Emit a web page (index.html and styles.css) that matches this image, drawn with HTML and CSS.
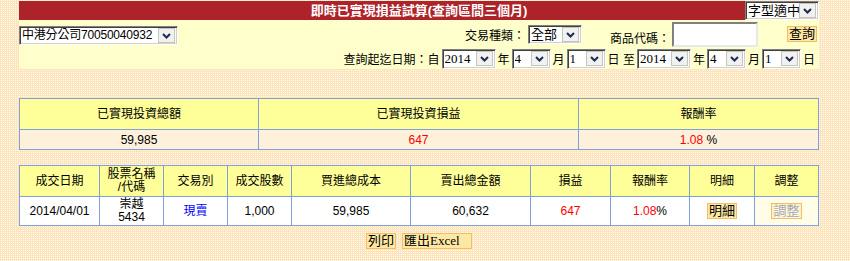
FILE: index.html
```html
<!DOCTYPE html>
<html lang="zh-Hant">
<head>
  <meta charset="UTF-8">
  <title>即時已實現損益試算</title>
  <link rel="stylesheet" href="styles.css">
</head>
<body>
  <div class="page">
    <div class="topbar">
      <div class="title">即時已實現損益試算(查詢區間三個月)</div>
      <select class="sel sel-font"><option>字型適中</option></select>
    </div>

    <div class="query">
      <div class="qrow">
        <select class="sel sel-branch"><option>中港分公司70050040932</option></select>
        <div class="qright">
          <span class="lbl">交易種類：</span>
          <select class="sel sel-kind"><option>全部</option></select>
          <span class="lbl lbl-code">商品代碼：</span>
          <input type="text" class="code">
          <button class="btn btn-query">查詢</button>
        </div>
      </div>
      <div class="qrow qdate">
        <span class="lbl">查詢起迄日期：自</span>
        <select class="sel sel-date sel-year"><option>2014</option></select><span class="lbl">年</span>
        <select class="sel sel-date sel-md"><option>4</option></select><span class="lbl">月</span>
        <select class="sel sel-date sel-md"><option>1</option></select><span class="lbl">日 至</span>
        <select class="sel sel-date sel-year"><option>2014</option></select><span class="lbl">年</span>
        <select class="sel sel-date sel-md"><option>4</option></select><span class="lbl">月</span>
        <select class="sel sel-date sel-md"><option>1</option></select><span class="lbl">日</span>
      </div>
    </div>

    <table class="grid summary">
      <tr>
        <th>已實現投資總額</th>
        <th>已實現投資損益</th>
        <th>報酬率</th>
      </tr>
      <tr>
        <td>59,985</td>
        <td class="red">647</td>
        <td><span class="red">1.08</span> %</td>
      </tr>
    </table>

    <table class="grid detail">
      <tr>
        <th>成交日期</th>
        <th>股票名稱<br>/代碼</th>
        <th>交易別</th>
        <th>成交股數</th>
        <th>買進總成本</th>
        <th>賣出總金額</th>
        <th>損益</th>
        <th>報酬率</th>
        <th>明細</th>
        <th>調整</th>
      </tr>
      <tr>
        <td>2014/04/01</td>
        <td class="stock">崇越<br>5434</td>
        <td class="blue">現賣</td>
        <td>1,000</td>
        <td>59,985</td>
        <td>60,632</td>
        <td class="red">647</td>
        <td><span class="red">1.08</span>%</td>
        <td><button class="btn">明細</button></td>
        <td class="adjust"><button class="btn" disabled>調整</button></td>
      </tr>
    </table>

    <div class="actions">
      <button class="btn">列印</button>
      <button class="btn btn-excel">匯出Excel</button>
    </div>
  </div>
</body>
</html>
```

FILE: styles.css
```css
html, body { margin: 0; padding: 0; }
body {
  background-color: #fde4bd;
  background-image: repeating-conic-gradient(#fff9ee 0 25%, #fde4bd 0 100%);
  background-size: 2px 2px;
  font-family: "Liberation Sans", "Noto Sans CJK TC", sans-serif;
  font-size: 12px;
  color: #000;
}
.page { width: 800px; margin: 1px 0 0 19px; }

/* title bar */
.topbar { display: flex; height: 19px; }
.title {
  flex: 1; background: #ae2329; color: #fff; font-weight: bold; font-size: 13px;
  text-align: center; line-height: 19px; padding-left: 74px;
}
.sel-font { width: 74px; height: 19px; }

/* select boxes, old windows look */
.sel {
  -webkit-appearance: none; appearance: none; box-sizing: border-box;
  height: 19px; padding: 0 18px 0 2px; margin: 0;
  font-family: "Liberation Sans", "Noto Sans CJK TC", sans-serif; font-size: 13px; color: #000;
  border: 1px solid; border-color: #808080 #fff #fff #808080;
  box-shadow: inset 1px 1px #404040, inset -1px -1px #d4d0c8;
  background: #fff url("data:image/svg+xml,%3Csvg xmlns='http://www.w3.org/2000/svg' width='17' height='15'%3E%3Crect x='.5' y='.5' width='16' height='14' fill='%23f1f1ee' stroke='%23c4c4c4'/%3E%3Cpath d='M5 6l3.5 3.5L12 6' fill='none' stroke='%231d2b5c' stroke-width='2'/%3E%3C/svg%3E") no-repeat right 2px center;
  border-radius: 0;
}

/* query panel */
.query { background: #ffffcc; padding: 0 2px 0 0; }
.qrow { display: flex; align-items: center; }
.qrow:first-child { height: 28px; }
.qright { margin-left: auto; display: flex; align-items: center; }
.lbl { font-size: 12px; white-space: nowrap; }
.sel-branch { width: 159px; margin-top: 2px; font-size: 12px; letter-spacing: -0.2px; }
.sel-kind { width: 54px; margin: 0 28px 0 3px; }
.lbl-code { margin-top: 7px; }
.code {
  box-sizing: border-box; width: 86px; height: 25px; margin: 0 29px 0 2px;
  border: 2px solid; border-color: #808080 #e8e8e8 #e8e8e8 #808080; background: #fff;
}
.btn-query { font-size: 13px; }

.qdate { justify-content: flex-end; height: 21px; }
.qdate .lbl { margin: 0 2px; }
.sel-date { height: 20px; font-family: "Liberation Serif", "Noto Sans CJK TC", serif; font-size: 13px; }
.sel-year { width: 54px; }
.sel-md { width: 39px; }

/* buttons */
.btn {
  font-family: "Liberation Serif", "Noto Sans CJK TC", serif; font-size: 13px;
  background: #ffe8a4; border: 1px solid #f3bd63; padding: 0 1px; height: 16px;
  line-height: 14px; color: #000; cursor: pointer;
}
.btn:disabled { background: #fff0c4; color: #a8a8a8; text-shadow: 1px 1px #fff; }

/* grids */
.grid {
  width: 800px; border-collapse: collapse; table-layout: fixed;
  border: 1px solid #7f9fdf; text-align: center;
}
.grid th, .grid td { border: 1px solid #7f9fdf; padding: 0; font-weight: normal; }
.grid th { background: #ffff99; height: 30px; line-height: 13px; }
.summary { margin-top: 29px; }
.summary td { background: #fdf1dc; height: 19px; }
.summary th:nth-child(1) { width: 238px; }
.summary th:nth-child(2) { width: 319px; }

.detail { margin-top: 15px; }
.detail td { background: #fff; height: 28px; line-height: 13px; }
.detail td.adjust { background: #fffde8; }
.detail th:nth-child(1) { width: 79px; }
.detail th:nth-child(2) { width: 63px; }
.detail th:nth-child(3) { width: 63px; }
.detail th:nth-child(4) { width: 63px; }
.detail th:nth-child(5) { width: 118px; }
.detail th:nth-child(6) { width: 119px; }
.detail th:nth-child(7) { width: 79px; }
.detail th:nth-child(8) { width: 78px; }
.detail th:nth-child(9) { width: 64px; }

.red { color: #ff0000; }
.blue { color: #0000ff; }

.actions { display: flex; justify-content: center; gap: 6px; margin-top: 7px; }
.btn-excel { width: 70px; text-align: left; }
```
